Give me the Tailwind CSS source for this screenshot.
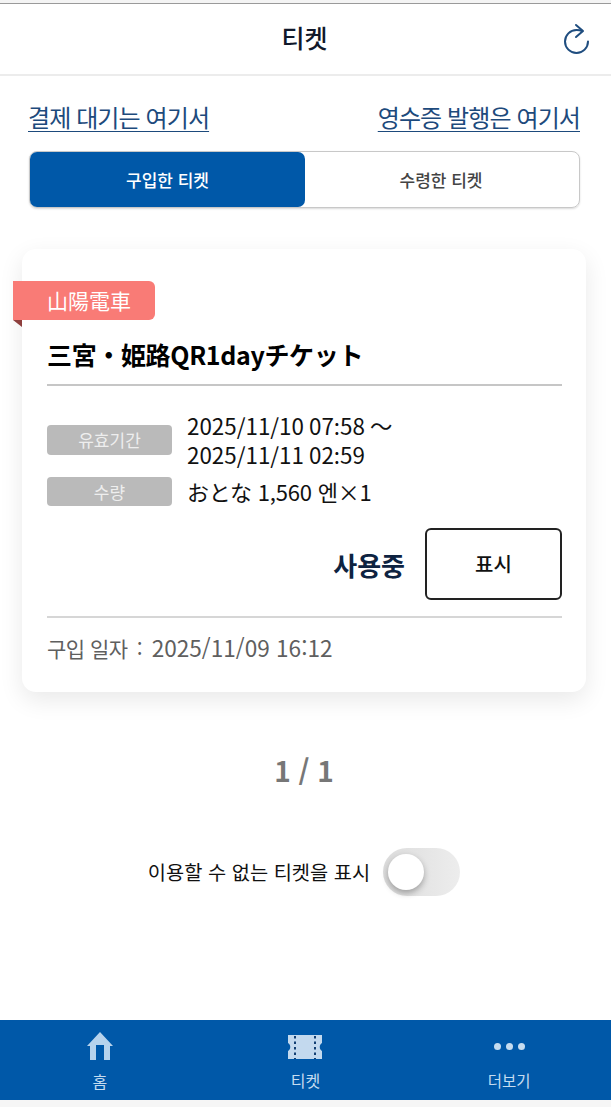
<!DOCTYPE html>
<html lang="ko">
<head>
  <meta charset="UTF-8" />
  <meta name="viewport" content="width=device-width, initial-scale=1.0" />
  <title>티켓</title>
  <script src="https://cdn.jsdelivr.net/npm/@tailwindcss/browser@4"></script>
</head>
<body class="bg-white font-['Noto_Sans_CJK_KR',sans-serif]">
  <div class="flex flex-col w-[611px] h-[1107px] overflow-hidden">
    <!-- Header -->
    <div class="h-[4px] bg-[#f4f4f4] border-b border-[#9a9a9a]"></div>
    <div class="relative flex items-center justify-center h-[72px] border-b-2 border-[#ececec]">
      <h1 class="mr-[2px] text-[25px] font-medium leading-none text-[#10182a] -mt-[3px]">티켓</h1>
      <svg class="absolute left-[562px] top-[18px] w-[30px] h-[36px]" viewBox="0 0 30 36" fill="none" stroke="#1f4d7f" stroke-width="2" stroke-linecap="round" stroke-linejoin="round">
        <path d="M20 9C19 8.500 16 8 14.500 8A11.500 11.500 0 1 0 26 19.500" />
        <path d="M14 3L21 9L14 15" />
      </svg>
    </div>

    <!-- Links -->
    <div class="flex justify-between pl-[28px] pr-[31px] mt-[22px]">
      <a class="text-[24px] tracking-[-0.9px] leading-[38px] underline underline-offset-4 decoration-1 text-[#1d4a7c]">결제 대기는 여기서</a>
      <a class="text-[24px] tracking-[-0.9px] leading-[38px] underline underline-offset-4 decoration-1 text-[#1d4a7c]">영수증 발행은 여기서</a>
    </div>

    <!-- Tabs -->
    <div class="flex ml-[29px] mt-[15px] w-[551px] h-[57px] rounded-[8px] border border-[#c8c8c8] shadow-[0_1px_2px_rgba(0,0,0,0.15)]">
      <div class="flex items-center justify-center w-[275px] rounded-[7px] bg-[#0058a8] text-white text-[17px] font-medium">구입한 티켓</div>
      <div class="flex flex-1 items-center justify-center pr-[2px] text-[#444444] text-[17px] font-medium">수령한 티켓</div>
    </div>

    <!-- Ticket card -->
    <div class="relative ml-[22px] mt-[41px] w-[564px] h-[443px] rounded-[14px] bg-white shadow-[0_8px_24px_rgba(0,0,0,0.09)] pl-[25px] pr-[24px] pt-[32px]">
      <div class="absolute left-[-9px] top-[32px] flex items-center w-[142px] h-[39px] pl-[34px] rounded-r-[6px] bg-[#f97b76] text-white text-[21px] font-['Noto_Sans_CJK_JP',sans-serif]">山陽電車</div>
      <div class="absolute left-[-9px] top-[71px] w-0 h-0 border-t-[7px] border-l-[9px] border-t-[#8e3f3d] border-l-transparent"></div>

      <div class="mt-[54px] pb-[11px] border-b-2 border-[#c6c6c6] text-[25px] tracking-[-0.35px] leading-[38px] font-bold text-black font-['Noto_Sans_CJK_JP',sans-serif]">三宮・姫路QR1dayチケット</div>

      <div class="flex mt-[25px]">
        <div class="flex items-center justify-center w-[125px] h-[30px] mt-[14px] rounded-[4px] bg-[#bababa] text-[#eeeeee] text-[17px]">유효기간</div>
        <div class="ml-[15px] text-[22.4px] leading-[29px] text-[#111111] font-['Noto_Sans_CJK_JP',sans-serif]">2025/11/10 07:58 ～<br>2025/11/11 02:59</div>
      </div>
      <div class="flex items-center mt-[8px]">
        <div class="flex items-center justify-center w-[125px] h-[29px] rounded-[4px] bg-[#bababa] text-[#eeeeee] text-[17px]">수량</div>
        <div class="ml-[15px] text-[22px] tracking-[-0.2px] leading-[29px] text-[#111111] font-['Noto_Sans_CJK_JP',sans-serif]">おとな 1,560 <span class="font-['Noto_Sans_CJK_KR',sans-serif]">엔</span>×1</div>
      </div>

      <div class="flex items-center justify-end mt-[22px]">
        <span class="text-[26px] font-bold text-[#0e2341]">사용중</span>
        <button class="flex items-center justify-center w-[137px] h-[72px] ml-[20px] rounded-[6px] border-2 border-[#222222] bg-white text-[20px] font-medium text-[#111111]">표시</button>
      </div>

      <div class="flex items-baseline mt-[16px] pt-[15px] border-t-2 border-[#d6d6d6] leading-[30px] text-[#5f5f5f]">
        <span class="text-[21px] tracking-[-0.5px]">구입 일자</span>
        <span class="w-[24px] text-center text-[21px]">:</span>
        <span class="text-[22.6px]">2025/11/09 16:12</span>
      </div>
    </div>

    <!-- Pager -->
    <div class="mt-[57px] pr-[3px] text-center text-[28px] leading-[42px] font-bold text-[#777777]">1 / 1</div>

    <!-- Toggle -->
    <div class="flex items-center justify-center mt-[57px] pr-[3px]">
      <span class="text-[19.8px] leading-[30px] text-[#111111]">이용할 수 없는 티켓을 표시</span>
      <div class="relative ml-[13px] w-[77px] h-[48px] rounded-full bg-linear-to-r from-[#dcdcdc] to-[#ededed]">
        <div class="absolute left-[5px] top-[6px] w-[36px] h-[36px] rounded-full bg-white shadow-[0_3px_6px_rgba(0,0,0,0.3)]"></div>
      </div>
    </div>

    <!-- Bottom nav -->
    <div class="grid grid-cols-3 mt-[124px] h-[80px] bg-[#0058a8] text-[#c5dcf0] text-[16px]">
      <div class="flex flex-col items-center pr-[4px] pt-[11px]">
        <svg class="w-[26px] h-[30px]" viewBox="0 0 26 30" fill="#b7d3ec">
          <path fill-rule="evenodd" d="M13 1L26 15H23V29H17V14H9V29H3V15H0Z" />
        </svg>
        <span class="mt-[9px] leading-[22px]">홈</span>
      </div>
      <div class="flex flex-col items-center pt-[14px]">
        <svg class="w-[34px] h-[26px]" viewBox="0 0 34 26">
          <path fill="#c3d9ee" d="M0 1H34V9C31 10.500 31 15.500 34 17V25H0V17C3 15.500 3 10.500 0 9Z" />
          <path stroke="#123f73" stroke-width="2" stroke-dasharray="2.500 3" fill="none" d="M7 2V25M27 2V25" />
        </svg>
        <span class="mt-[9px] leading-[22px]">티켓</span>
      </div>
      <div class="flex flex-col items-center pt-[20px]">
        <div class="flex gap-[5px] h-[12px] items-center">
          <div class="w-[7px] h-[7px] rounded-full bg-[#c5dcf0]"></div>
          <div class="w-[7px] h-[7px] rounded-full bg-[#c5dcf0]"></div>
          <div class="w-[7px] h-[7px] rounded-full bg-[#c5dcf0]"></div>
        </div>
        <span class="mt-[17px] leading-[22px] text-[15.5px]">더보기</span>
      </div>
    </div>
    <div class="flex-1 bg-[#f6f6f6]"></div>
  </div>
</body>
</html>
